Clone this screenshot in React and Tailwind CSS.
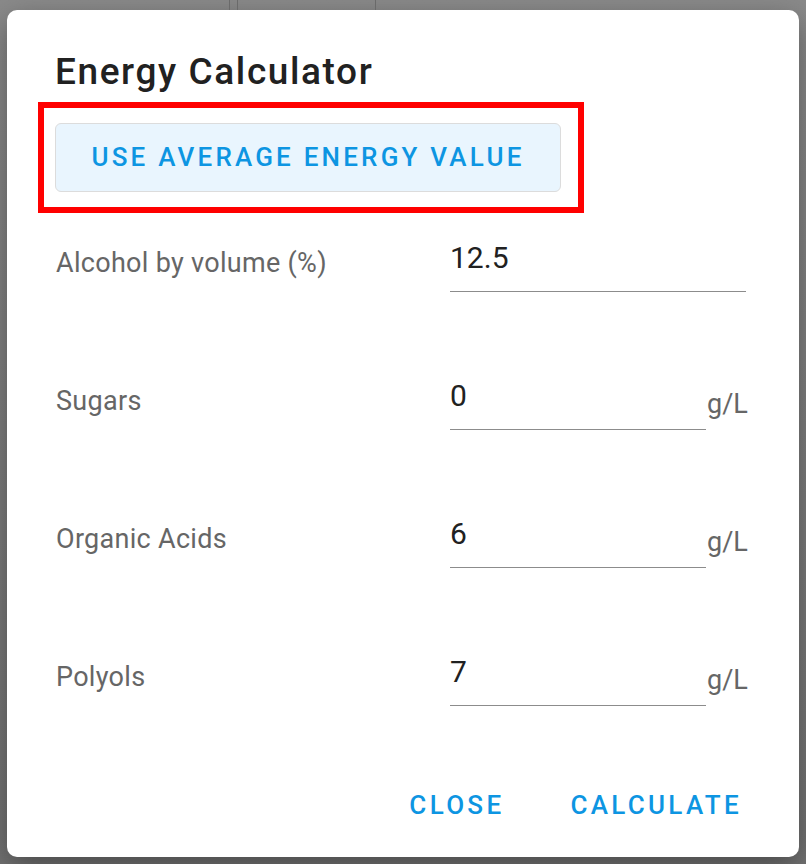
const rows = [
  { label: "Alcohol by volume (%)", value: "12.5", unit: null },
  { label: "Sugars", value: "0", unit: "g/L" },
  { label: "Organic Acids", value: "6", unit: "g/L" },
  { label: "Polyols", value: "7", unit: "g/L" },
];

export default function App() {
  return (
    <div
      className="relative w-[806px] h-[864px] overflow-hidden bg-gradient-to-b from-[#8a8a8a] to-[#727272]"
      style={{ fontFamily: "Roboto, 'Liberation Sans', sans-serif" }}
    >
      {/* page behind the dialog */}
      <div className="flex h-[10px] text-[#555]">
        <div className="w-[230px] border-r border-[#6a6a6a]" />
        <div className="w-[8px] border-r border-[#6a6a6a]" />
        <div className="w-[138px] border-r border-[#6a6a6a]" />
      </div>

      <div className="mx-[7px] h-[847px] rounded-[10px] bg-white shadow-[0_10px_30px_rgba(0,0,0,0.35)] flex flex-col">
        {/* Header */}
        <div className="pl-[48px] pt-[40px] text-[37px] font-medium leading-[44px] text-[#212121] tracking-[1.6px]">
          Energy Calculator
        </div>

        <div className="ml-[31px] mt-[8px] w-[546px] h-[111px] border-[6px] border-[#ff0000] pl-[11px] pt-[15px]">
          <button className="w-[506px] h-[69px] rounded-[6px] bg-[#e9f5fe] border border-[#dcdcdc] text-[#0d95e2] text-[26px] font-medium tracking-[3.2px] flex items-center justify-center">
            USE AVERAGE ENERGY VALUE
          </button>
        </div>

        {/* Body */}
        <div className="flex flex-col pl-[49px] pt-[20px]">
          {rows.map((r) => (
            <Row key={r.label} {...r} />
          ))}
        </div>

        {/* Footer */}
        <div className="mt-auto mb-[32px] flex justify-end gap-[66px] pr-[57px] text-[26px] font-medium tracking-[3.3px] text-[#0d95e2]">
          <button>CLOSE</button>
          <button>CALCULATE</button>
        </div>
      </div>
    </div>
  );
}

function Row({ label, value, unit }) {
  return (
    <div className="flex items-start h-[138px]">
      <div className="w-[394px] pt-[10px] text-[27px] tracking-[0.3px] text-[#666]">{label}</div>
      <div className="flex items-end">
        <div
          className={`${unit ? "w-[256px]" : "w-[296px]"} border-b border-[#8c8c8c] h-[59px] pt-[2px] text-[30px] text-[#212121]`}
        >
          {value}
        </div>
        {unit && <span className="ml-[1px] mb-[6px] text-[27px] text-[#666]">{unit}</span>}
      </div>
    </div>
  );
}
